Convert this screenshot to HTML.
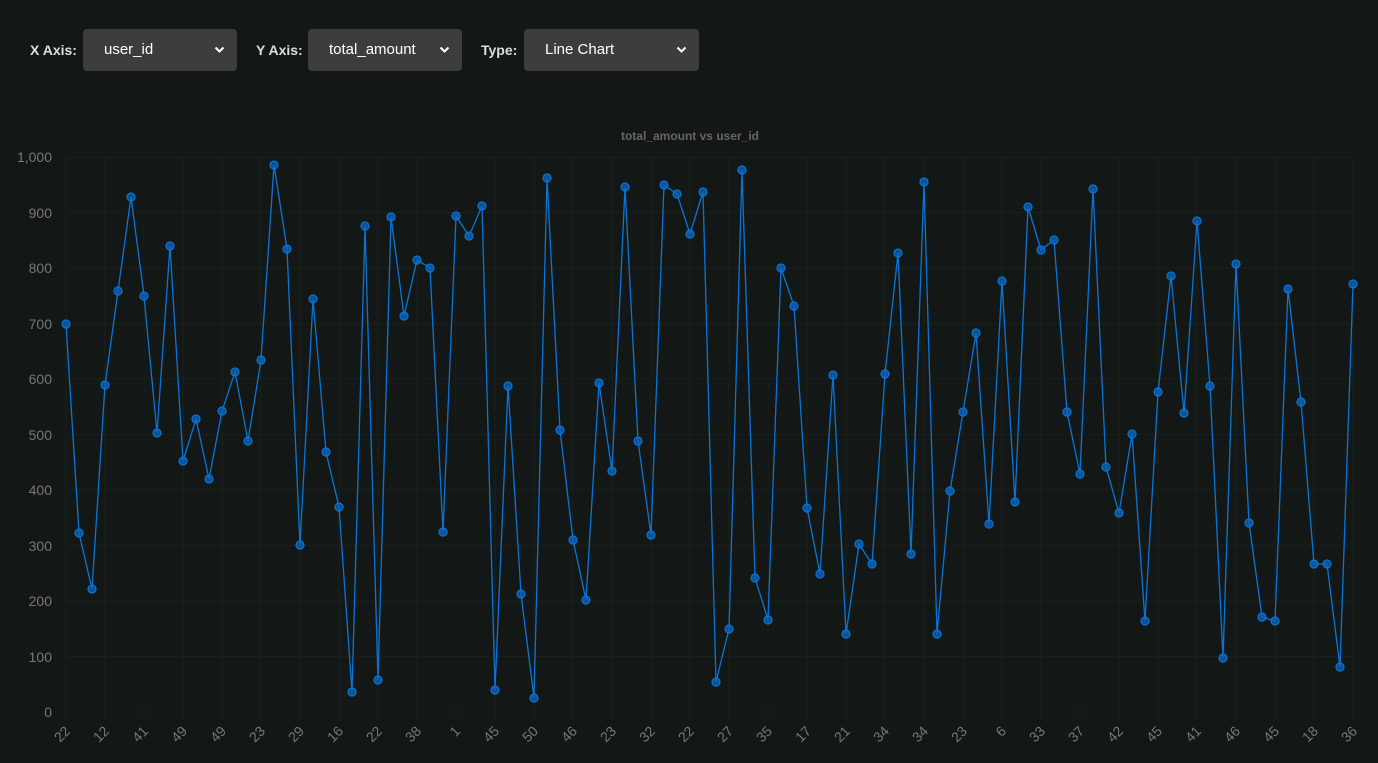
<!DOCTYPE html>
<html><head><meta charset="utf-8"><style>
html,body{margin:0;padding:0;background:#131817;width:1378px;height:763px;overflow:hidden;font-family:"Liberation Sans",sans-serif}
.lab{position:absolute;top:42px;color:#ddd;font-weight:bold;font-size:14px}
.sel{position:absolute;top:29px;height:42px;background:#3d3d3d;border-radius:4px;color:#fff;font-size:15px;line-height:42px;box-sizing:border-box;padding-left:21px}
.sel svg{position:absolute;right:12px;top:17px}
</style></head><body>
<div class="lab" style="left:30px">X Axis:</div>
<div class="sel" style="left:83px;width:154px">user_id<svg width="11" height="8" viewBox="0 0 11 8"><path d="M1.5 1.5L5.5 5.5L9.5 1.5" stroke="#fff" stroke-width="2" fill="none"/></svg></div>
<div class="lab" style="left:256px">Y Axis:</div>
<div class="sel" style="left:308px;width:154px">total_amount<svg width="11" height="8" viewBox="0 0 11 8"><path d="M1.5 1.5L5.5 5.5L9.5 1.5" stroke="#fff" stroke-width="2" fill="none"/></svg></div>
<div class="lab" style="left:481px">Type:</div>
<div class="sel" style="left:524px;width:175px">Line Chart<svg width="11" height="8" viewBox="0 0 11 8"><path d="M1.5 1.5L5.5 5.5L9.5 1.5" stroke="#fff" stroke-width="2" fill="none"/></svg></div>
<svg width="1378" height="763" style="position:absolute;left:0;top:0" font-family="Liberation Sans, sans-serif">
<defs><marker id="m" viewBox="-5 -5 10 10" markerWidth="10" markerHeight="10" markerUnits="userSpaceOnUse" refX="0" refY="0"><circle r="4" fill="rgba(10,100,190,0.75)" stroke="#0a74d6" stroke-width="1.2"/></marker></defs>
<text x="690" y="140" text-anchor="middle" fill="#666" font-size="12" font-weight="bold">total_amount vs user_id</text>
<g stroke="#1a1f1d" stroke-width="1">
<path d="M66 157H1353M66 212.5H1353M66 268H1353M66 323.5H1353M66 379H1353M66 434.5H1353M66 490H1353M66 545.5H1353M66 601H1353M66 656.5H1353M66 712H1353"/>
<path d="M66 157V720M105 157V720M144 157V720M183 157V720M222 157V720M261 157V720M300 157V720M339 157V720M378 157V720M417 157V720M456 157V720M495 157V720M534 157V720M573 157V720M612 157V720M651 157V720M690 157V720M729 157V720M768 157V720M807 157V720M846 157V720M885 157V720M924 157V720M963 157V720M1002 157V720M1041 157V720M1080 157V720M1119 157V720M1158 157V720M1197 157V720M1236 157V720M1275 157V720M1314 157V720M1353 157V720"/>
</g>
<g fill="#777" font-size="14" text-anchor="end">
<text x="52" y="162">1,000</text><text x="52" y="218">900</text><text x="52" y="273">800</text><text x="52" y="329">700</text><text x="52" y="384">600</text><text x="52" y="440">500</text><text x="52" y="495">400</text><text x="52" y="551">300</text><text x="52" y="606">200</text><text x="52" y="662">100</text><text x="52" y="717">0</text>
</g>
<g fill="#777" font-size="14" text-anchor="end">
<text transform="translate(71,732) rotate(-45)">22</text>
<text transform="translate(110,732) rotate(-45)">12</text>
<text transform="translate(149,732) rotate(-45)">41</text>
<text transform="translate(188,732) rotate(-45)">49</text>
<text transform="translate(227,732) rotate(-45)">49</text>
<text transform="translate(266,732) rotate(-45)">23</text>
<text transform="translate(305,732) rotate(-45)">29</text>
<text transform="translate(344,732) rotate(-45)">16</text>
<text transform="translate(383,732) rotate(-45)">22</text>
<text transform="translate(422,732) rotate(-45)">38</text>
<text transform="translate(461,732) rotate(-45)">1</text>
<text transform="translate(500,732) rotate(-45)">45</text>
<text transform="translate(539,732) rotate(-45)">50</text>
<text transform="translate(578,732) rotate(-45)">46</text>
<text transform="translate(617,732) rotate(-45)">23</text>
<text transform="translate(656,732) rotate(-45)">32</text>
<text transform="translate(695,732) rotate(-45)">22</text>
<text transform="translate(734,732) rotate(-45)">27</text>
<text transform="translate(773,732) rotate(-45)">35</text>
<text transform="translate(812,732) rotate(-45)">17</text>
<text transform="translate(851,732) rotate(-45)">21</text>
<text transform="translate(890,732) rotate(-45)">34</text>
<text transform="translate(929,732) rotate(-45)">34</text>
<text transform="translate(968,732) rotate(-45)">23</text>
<text transform="translate(1007,732) rotate(-45)">6</text>
<text transform="translate(1046,732) rotate(-45)">33</text>
<text transform="translate(1085,732) rotate(-45)">37</text>
<text transform="translate(1124,732) rotate(-45)">42</text>
<text transform="translate(1163,732) rotate(-45)">45</text>
<text transform="translate(1202,732) rotate(-45)">41</text>
<text transform="translate(1241,732) rotate(-45)">46</text>
<text transform="translate(1280,732) rotate(-45)">45</text>
<text transform="translate(1319,732) rotate(-45)">18</text>
<text transform="translate(1358,732) rotate(-45)">36</text>
</g>
<polyline fill="none" stroke="#0a74d6" stroke-width="1.3" marker-start="url(#m)" marker-mid="url(#m)" marker-end="url(#m)" points="66,324 79,533 92,589 105,385 118,291 131,197 144,296 157,433 170,246 183,461 196,419 209,479 222,411 235,372 248,441 261,360 274,165 287,249 300,545 313,299 326,452 339,507 352,692 365,226 378,680 391,217 404,316 417,260 430,268 443,532 456,216 469,236 482,206 495,690 508,386 521,594 534,698 547,178 560,430 573,540 586,600 599,383 612,471 625,187 638,441 651,535 664,185 677,194 690,234 703,192 716,682 729,629 742,170 755,578 768,620 781,268 794,306 807,508 820,574 833,375 846,634 859,544 872,564 885,374 898,253 911,554 924,182 937,634 950,491 963,412 976,333 989,524 1002,281 1015,502 1028,207 1041,250 1054,240 1067,412 1080,474 1093,189 1106,467 1119,513 1132,434 1145,621 1158,392 1171,276 1184,413 1197,221 1210,386 1223,658 1236,264 1249,523 1262,617 1275,621 1288,289 1301,402 1314,564 1327,564 1340,667 1353,284"/>
</svg>
</body></html>
